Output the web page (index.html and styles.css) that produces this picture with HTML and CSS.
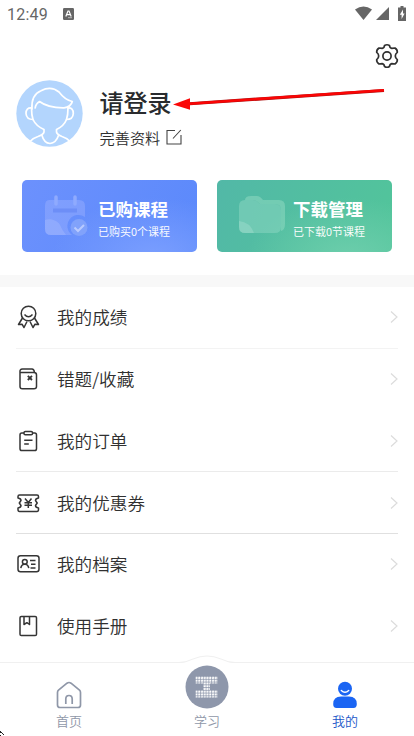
FILE: index.html
```html
<!DOCTYPE html>
<html lang="zh-CN">
<head>
<meta charset="utf-8">
<title>我的</title>
<link rel="stylesheet" href="styles.css">
</head>
<body>
<div class="screen">
  <header class="status">
    <span class="time">12:49</span>
    <svg class="app-badge" width="11" height="12" viewBox="0 0 11 12"><rect width="11" height="12" rx="1.2" fill="#666"/><path d="M2.8 8.5 5 3h1l2.2 5.5M3.7 6.7h3.6" fill="none" stroke="#fff" stroke-width="1.2"/><path d="M5 9.7h4" stroke="#ccc" stroke-width=".8"/></svg>
    <svg class="signals" width="52" height="16" viewBox="0 0 52 16" fill="#666"><path d="M0 3.6Q8.5-2.4 17 3.6L8.5 14Z"/><path d="M34 1v13H21Z"/><path d="M45.500 0h3v1.500H51V15h-8V1.500h2.500Z"/><path d="M48 3.500 44.800 8.700h1.800v4.200l3-5.400H48Z" fill="#fff"/></svg>
  </header>

  <div class="toolbar">
    <svg width="24" height="26" viewBox="0 0 24 26" fill="none" stroke="#303030" stroke-width="1.7" stroke-linejoin="round"><path d="M9.500 2.500Q12 1 14.500 2.500Q14.700 5 16.800 5.400L20 5Q22.600 6.800 22.300 9.400Q20.300 10.800 20.300 13Q20.300 15.200 22.300 16.600Q22.600 19.200 20 21L16.800 20.600Q14.700 21 14.500 23.500Q12 25 9.500 23.500Q9.300 21 7.200 20.600L4 21Q1.400 19.200 1.700 16.600Q3.700 15.200 3.700 13Q3.700 10.800 1.700 9.400Q1.400 6.800 4 5L7.200 5.400Q9.300 5 9.500 2.500Z"/><circle cx="12" cy="13" r="4.100"/></svg>
  </div>

  <section class="profile">
    <svg class="avatar" width="67" height="67" viewBox="0 0 67 67" fill="none" stroke="#fff" stroke-width="1.700" stroke-linecap="round" stroke-linejoin="round"><circle cx="33.500" cy="33.500" r="33.200" fill="#b3d5fd" stroke="none"/><path d="M16 29Q15 15 25 10.800Q35 5.500 43 12Q49 20 56.300 21.500Q55 27 48 27.800Q32 28 23.500 21.500Q19.500 24 19.200 28"/><path d="M15.500 28Q10 27.500 10 33.500Q10.500 39.500 17 39.500Q20 46 28 49.500V52Q27.500 54.500 22 56.500Q17 58 14 61.500M52 28Q57.300 27.500 57.300 33.500Q57 39.500 50.500 39.500Q48 46 40.500 49.500V52Q41 54.500 46 56.500Q51 58 54 61.500"/><path d="M15.500 28Q15.500 35 17 39.500M52 28Q52 35 50.500 39.500M26 55.500Q28 63 34 63.500Q40 63 42.500 55.500"/></svg>
    <div class="who">
      <h1>请登录</h1>
      <p>完善资料<svg width="16" height="16" viewBox="0 0 16 16" fill="none" stroke="#444" stroke-width="1.100"><path d="M9 1.500H1v13.500h14V6M7 9.500 14.800 1"/></svg></p>
    </div>
    <svg class="arrow" width="214" height="24" viewBox="0 0 214 24"><path d="M14 17 212 3.500" stroke="#a91212" stroke-width="3.200"/><path d="M14 17 212 3.200" stroke="#fa0505" stroke-width="2.400"/><path d="M1 17.500 18 11.300v11.500Z" fill="#fa0808"/></svg>
  </section>

  <section class="cards">
    <div class="card blue">
      <svg width="46" height="46" viewBox="0 0 46 46"><path d="M6 6H36Q42 6 42 12V23A10 10 0 0 0 29 41H8Q2 41 2 35V12Q2 6 6 6Z" fill="#a9b9ff" opacity=".36"/><path d="M2 26C8 24 15 27 17 31Q19 36 23 41H8Q2 41 2 35Z" fill="#b6c7ff" opacity=".3"/><path d="M13 3v7M32 3v7" stroke="#8faafe" stroke-width="3.500" stroke-linecap="round"/><path d="M10 16.500h24" stroke="#6688f5" stroke-width="4" opacity=".7"/><circle cx="36" cy="33.500" r="8.500" fill="#81a2fb"/><path d="m31.500 33.500 3.500 3.500 6-6" fill="none" stroke="#b8caff" stroke-width="2"/></svg>
      <div><h2>已购课程</h2><p>已购买0个课程</p></div>
    </div>
    <div class="card green">
      <svg width="48" height="46" viewBox="0 0 48 46"><path d="M7 6Q7 2 13 2H19Q22 2 25 6H41Q47 6 47 12V30Q47 36 43 37V16Q43 10 37 10H22Q18 6 15 6Z" fill="#94dbc4" opacity=".5"/><path d="M1 12Q1 6 7 6H15Q18 6 22 10H37Q43 10 43 16V33Q43 39 37 39H7Q1 39 1 33Z" fill="#8ed7c4" opacity=".5"/><path d="M1 27Q12 28 16 39H7Q1 39 1 33Z" fill="#a7e2d2" opacity=".4"/></svg>
      <div><h2>下载管理</h2><p>已下载0节课程</p></div>
    </div>
  </section>

  <nav class="menu">
    <a class="row faint"><svg class="ico" viewBox="0 0 24 24"><circle cx="12.500" cy="8.500" r="7.300"/><path d="M8.500 9.500Q12.500 14 16.500 9.500M6.500 13 2.500 19.500 6 19.200 8 22.500 11 16.500M18.500 13 22.500 19.500 19 19.200 17 22.500 14 16.500"/></svg><span>我的成绩</span><svg class="chev" viewBox="0 0 8 12"><path d="m1 .5 6 5.500-6 5.500"/></svg></a>
    <a class="row plain"><svg class="ico" viewBox="0 0 24 24"><path d="M4 5V19.500Q4 21.800 6.300 21.800H18Q20.500 21.800 20.500 19.500V8Q20.500 5.500 18 5.500H4Q3.500 2 6.500 2H16Q18 2 18.500 5.500"/><path d="m11.800 8.800 4.200 4.200m0-4.200-4.200 4.200" stroke-width="1.800"/></svg><span>错题/收藏</span><svg class="chev" viewBox="0 0 8 12"><path d="m1 .5 6 5.500-6 5.500"/></svg></a>
    <a class="row"><svg class="ico" viewBox="0 0 24 24"><path d="M8 4H5.800Q4 4 4 6V19.800Q4 21.600 5.800 21.600H18.700Q20.500 21.600 20.500 19.800V6Q20.500 4 18.700 4H16.500"/><rect x="8" y="2.500" width="8.500" height="3.200" rx="1.300"/><path d="M8.200 11.300h8.300M8.200 15h4.600"/></svg><span>我的订单</span><svg class="chev" viewBox="0 0 8 12"><path d="m1 .5 6 5.500-6 5.500"/></svg></a>
    <a class="row dark"><svg class="ico" viewBox="0 0 24 24"><path d="M3.500 4H21Q22.500 4 22.500 5.500V7Q19.500 7.500 19.500 9.500L21.200 12L19.500 14.500Q19.500 16.500 22.500 17V18.500Q22.500 20.500 21 20.500H3.500Q2 20.500 2 18.500V17Q5 16.500 5 14.500L3.300 12L5 9.500Q5 7.500 2 7V5.500Q2 4 3.500 4Z"/><path d="m9 7.500 3.300 4L15.500 7.500M12.300 11.500V17M8.500 11.700h7.500M8.500 14.300h7.500"/></svg><span>我的优惠券</span><svg class="chev" viewBox="0 0 8 12"><path d="m1 .5 6 5.500-6 5.500"/></svg></a>
    <a class="row plain"><svg class="ico" viewBox="0 0 24 24"><rect x="2" y="3.800" width="21" height="16" rx="2.500"/><circle cx="8.800" cy="9.800" r="2.400"/><path d="M4.800 16.200Q5.500 12 8.800 12.200Q12 12 12.800 16.200M14 8.500h5.500M15 12.300h4.500M14.500 16h5"/></svg><span>我的档案</span><svg class="chev" viewBox="0 0 8 12"><path d="m1 .5 6 5.500-6 5.500"/></svg></a>
    <a class="row plain"><svg class="ico" viewBox="0 0 24 24"><rect x="4" y="2.500" width="16.500" height="19" rx="1.300"/><path d="M8 2.500V10.500L10.900 8.700 13.500 10.500V2.500"/></svg><span>使用手册</span><svg class="chev" viewBox="0 0 8 12"><path d="m1 .5 6 5.500-6 5.500"/></svg></a>
  </nav>

  <footer class="tabs">
    <a class="tab"><svg width="28" height="28" viewBox="0 0 28 28" fill="none" stroke="#8f97a8" stroke-width="1.700" stroke-linejoin="round"><path d="M3.500 9.200 12 2.200Q14 .8 16 2.200L24.500 9.200Q25.500 10 25.500 11.500V24Q25.500 26.500 23 26.500H5Q2.500 26.500 2.500 24V11.500Q2.500 10 3.500 9.200Z"/><path d="M10.800 23V18Q10.800 14.500 14 14.500T17.200 18V23"/></svg><span>首页</span></a>
    <a class="tab study">
      <svg width="56" height="56" viewBox="0 0 56 56"><defs><pattern id="mesh" width="2.750" height="2.750" patternUnits="userSpaceOnUse"><rect width="2.100" height="2.100" rx=".4" fill="#fff"/></pattern></defs><path d="M0 8Q7 8 14 4Q28-2 42 4Q49 8 56 8V20H0Z" fill="#fff"/><path d="M0 7.500Q7 7.500 14 4Q28-2 42 4Q49 7.500 56 7.500" fill="none" stroke="#f0f0f0"/><circle cx="28" cy="32" r="21.500" fill="#8e97ab"/><path d="M16.500 21h22v7.500h-7.500v6.500h7.500v7.500h-22v-7.500H24v-6.500h-7.500Z" fill="url(#mesh)"/></svg>
      <span>学习</span></a>
    <a class="tab active"><svg width="28" height="28" viewBox="0 0 28 28"><circle cx="14" cy="7.800" r="7" fill="#1b65f3"/><path d="M10.300 9.500Q14 13 17.700 9.500" fill="none" stroke="#fff" stroke-width="1.400" stroke-linecap="round"/><path d="M2.200 23Q2.200 15.500 10 15.500H18Q25.800 15.500 25.800 23Q25.800 27 22.500 27H5.500Q2.200 27 2.200 23Z" fill="#1b65f3"/></svg><span>我的</span></a>
    <svg class="corner" width="5" height="5" viewBox="0 0 5 5"><path d="M0 0h1v1h1v1h1v1h1v1H3V3H2V2H0ZM0 4h1v1H0Z" fill="#222"/></svg>
  </footer>
</div>
</body>
</html>
```

FILE: styles.css
```css
* { box-sizing: border-box; }
body, h1, h2, p { margin: 0; }
body {
  background: #fff;
  color: #303030;
  font-family: "Noto Sans CJK SC", "Noto Sans", sans-serif;
}
svg { display: block; flex: none; }
.screen {
  width: 414px;
  height: 736px;
  overflow: hidden;
  display: flex;
  flex-direction: column;
}
.status {
  height: 28px;
  display: flex;
  align-items: center;
  padding: 0 7px;
}
.time { padding-top: 1px; font: 16px/28px Roboto, sans-serif; color: #666; letter-spacing: .2px; }
.app-badge { margin-left: 15px; }
.signals { margin-left: auto; margin-right: 0; }
.toolbar {
  height: 52px;
  padding: 15px 15.5px 0;
  display: flex;
  justify-content: flex-end;
}
.profile {
  height: 100px;
  padding-left: 16px;
  display: flex;
  position: relative;
}
.who { margin-left: 16.5px; padding-top: 4px; }
.who h1 { font-size: 24px; line-height: 36px; font-weight: 500; color: #292b2e; }
.who p {
  display: flex;
  align-items: center;
  gap: 6px;
  margin-top: 5px;
  font-size: 15.2px;
  font-weight: 350;
  line-height: 24px;
}
.arrow { position: absolute; left: 171.5px; top: 7px; }
.cards {
  height: 95px;
  padding: 0 22px;
  display: grid;
  grid-template-columns: 175px 175px;
  gap: 20px;
}
.card {
  height: 72px;
  border-radius: 5px;
  display: flex;
  padding: 15px 0 0 21px;
  color: #fff;
}
.card svg { margin-top: -1px; }
.card > div { width: 76px; margin-left: auto; margin-right: 23px; }
.blue { background: radial-gradient(ellipse at 75% 110%, #7b9fff 0, transparent 55%), linear-gradient(115deg, #6c91fd, #5b89fb); }
.green { background: radial-gradient(ellipse at 75% 110%, #6dceac 0, transparent 55%), linear-gradient(115deg, #52b8a7, #52c59a); }
.card h2 { font-size: 17.5px; line-height: 28px; font-weight: 600; white-space: nowrap; }
.card p { font-size: 11px; line-height: 18px; margin-top: -1px; font-weight: 350; white-space: nowrap; }
.menu {
  height: 387px;
  border-top: 12px solid #f8f8f8;
  padding: 0 16px;
}
.row {
  height: 61.75px;
  display: flex;
  align-items: center;
  border-bottom: 1px solid #ebebeb;
}
.faint { border-color: #f3f3f3; }
.dark { border-color: #e0e0e0; }
.plain { border-color: transparent; }
.row span { margin-left: 17px; font-size: 17.6px; font-weight: 350; line-height: 28px; }
.ico {
  width: 24px;
  height: 24px;
  fill: none;
  stroke: #353535;
  stroke-width: 1.5;
  stroke-linejoin: round;
}
.chev {
  width: 8px;
  height: 12px;
  margin-left: auto;
  fill: none;
  stroke: #dcdcdc;
  stroke-width: 1.2;
}
.tabs {
  height: 74px;
  border-top: 1px solid #f0f0f0;
  display: grid;
  grid-template-columns: repeat(3, 1fr);
  position: relative;
}
.tab {
  display: flex;
  flex-direction: column;
  align-items: center;
  padding-top: 18px;
  color: #8f97a8;
  font-size: 13px;
  font-weight: 350;
}
.tab span { line-height: 20px; margin-top: 2px; }
.study { padding-top: 0; }
.study svg { margin-top: -8px; }
.study span { margin-top: 0; }
.active { color: #1b56c8; }
.corner { position: absolute; left: 0; bottom: 0; }
```
